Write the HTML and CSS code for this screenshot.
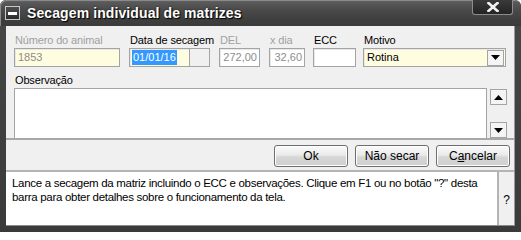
FILE: index.html
```html
<!DOCTYPE html>
<html lang="pt">
<head>
<meta charset="utf-8">
<title>Secagem individual de matrizes</title>
<link rel="stylesheet" href="styles.css">
</head>
<body>
<div class="window">
  <div class="titlebar">
    <span class="sysicon"><span class="dash"></span></span>
    <span class="title">Secagem individual de matrizes</span>
    <span class="close"><svg width="12" height="10" viewBox="0 0 12 10"><path d="M1.5 1L10.5 9M10.5 1L1.5 9" stroke="#f2f2f2" stroke-width="2.6" stroke-linecap="square"/></svg></span>
  </div>
  <div class="frame">
    <div class="client">
      <div class="top-panel">
        <div class="fields">
          <div class="field f-animal">
            <label class="lbl disabled">Número do animal</label>
            <div class="box yellow"><span class="val disabled">1853</span></div>
          </div>
          <div class="field f-date">
            <label class="lbl">Data de secagem</label>
            <div class="date-wrap">
              <div class="box yellow date"><span class="sel">01/01/16</span></div>
              <div class="date-btn"></div>
            </div>
          </div>
          <div class="field f-del">
            <label class="lbl disabled">DEL</label>
            <div class="box right"><span class="val disabled">272,00</span></div>
          </div>
          <div class="field f-xdia">
            <label class="lbl disabled">x dia</label>
            <div class="box right"><span class="val disabled">32,60</span></div>
          </div>
          <div class="field f-ecc">
            <label class="lbl">ECC</label>
            <div class="box"></div>
          </div>
          <div class="field f-motivo">
            <label class="lbl">Motivo</label>
            <div class="box yellow select">
              <span class="val">Rotina</span>
              <span class="drop"><svg width="9" height="5" viewBox="0 0 9 5"><path d="M0 0h9L4.5 5z" fill="#000"/></svg></span>
            </div>
          </div>
        </div>
        <label class="lbl obs-lbl">Observação</label>
        <div class="obs-row">
          <div class="memo"></div>
          <div class="scroll">
            <span class="sbtn"><svg width="9" height="5" viewBox="0 0 9 5"><path d="M4.5 0L9 5H0z" fill="#000"/></svg></span>
            <span class="sbtn"><svg width="9" height="5" viewBox="0 0 9 5"><path d="M0 0h9L4.5 5z" fill="#000"/></svg></span>
          </div>
        </div>
      </div>
      <div class="button-bar">
        <button class="btn">Ok</button>
        <button class="btn">Não secar</button>
        <button class="btn">C<u>a</u>ncelar</button>
      </div>
      <div class="hint">
        <div class="hint-text">Lance a secagem da matriz incluindo o ECC e observações. Clique em F1 ou no botão "?" desta barra para obter detalhes sobre o funcionamento da tela.</div>
        <div class="help">?</div>
      </div>
    </div>
  </div>
</div>
</body>
</html>
```
FILE: styles.css
```css
* { box-sizing: border-box; }
html, body { margin: 0; padding: 0; background: #ffffff; }
body { font-family: "Liberation Sans", Arial, sans-serif; font-size: 11px; color: #000; }

.window {
  width: 521px;
  height: 232px;
  display: flex;
  flex-direction: column;
  background: linear-gradient(#474747, #3a3a3a);
  border-radius: 6px 6px 0 0;
  overflow: hidden;
}

.titlebar {
  height: 26px;
  flex: none;
  display: flex;
  align-items: flex-start;
  background: linear-gradient(#6c6c6c 0, #5a5a5a 2px, #4a4a4a 10px, #3e3e3e 20px, #3a3a3a 26px);
  border-radius: 6px 6px 0 0;
  box-shadow: inset 1px 1px 0 #8a8a8a;
}

.sysicon {
  width: 15px;
  height: 14px;
  margin: 6px 0 0 5px;
  border: 1px solid #c8c8c8;
  background: linear-gradient(#4e4e4e, #2c2c2c);
  display: flex;
  align-items: center;
  justify-content: center;
  flex: none;
}
.sysicon .dash { width: 9px; height: 3px; background: #ffffff; }

.title {
  margin: 4px 0 0 7px;
  font-size: 14px;
  font-weight: bold;
  color: #ffffff;
  line-height: 18px;
  text-shadow: 1px 1px 1px #000, 0 0 2px #1e1e1e;
  letter-spacing: 0.1px;
}

.close {
  margin-left: auto;
  margin-right: 8px;
  width: 41px;
  height: 15px;
  background: linear-gradient(#3a3a3a, #242424);
  border: 1px solid #8c8c8c;
  border-top: none;
  border-radius: 0 0 3px 3px;
  display: flex;
  align-items: center;
  justify-content: center;
  padding-bottom: 1px;
}

.frame {
  flex: 1;
  display: flex;
  padding: 0 6px 6px 6px;
}

.client {
  flex: 1;
  display: flex;
  flex-direction: column;
  background: #f0f0f0;
  border-right: 1px solid #9a9a9a;
  border-bottom: 1px solid #8a8a8a;
}

.top-panel {
  padding: 8px 0 0 8px;
  border-bottom: 2px solid #a8a8a8;
}

.fields { display: flex; }
.field { display: flex; flex-direction: column; }
.f-animal { width: 106px; margin-right: 9px; }
.f-date { width: 81px; margin-right: 9px; }
.f-del { width: 41px; margin-right: 9px; }
.f-xdia { width: 36px; margin-right: 8px; }
.f-ecc { width: 43px; margin-right: 7px; }
.f-motivo { width: 143px; }

.lbl {
  display: block;
  height: 14px;
  line-height: 13px;
  padding-left: 1px;
  white-space: nowrap;
  letter-spacing: -0.15px;
}
.lbl.disabled { color: #a0a0a0; }

.box {
  height: 19px;
  border: 1px solid #a4a4a4;
  background: #ffffff;
  display: flex;
  align-items: center;
  padding: 0 3px;
  font-size: 11px;
  box-shadow: inset 1px 1px 0 #e8e8e8;
}
.box.yellow { background: #fffde0; }
.box.right { justify-content: flex-end; padding-right: 2px; }
.val { line-height: 13px; }
.val.disabled { color: #8c8c8c; }

.date-wrap { display: flex; }
.date { width: 61px; padding-left: 2px; flex: none; }
.sel { background: #3399ff; color: #ffffff; padding: 1px 1px; line-height: 13px; }
.date-btn {
  width: 20px;
  height: 19px;
  flex: none;
  border: 1px solid #a4a4a4;
  border-left: none;
  background: #f0f0f0;
}

.select { justify-content: space-between; padding-right: 1px; }
.drop {
  width: 17px;
  height: 16px;
  border: 1px solid #a4a4a4;
  background: #f4f4f4;
  display: flex;
  align-items: center;
  justify-content: center;
}

.obs-lbl { margin-top: 7px; }
.obs-row { display: flex; margin-top: 0; }
.memo {
  width: 473px;
  height: 50px;
  border: 1px solid #a4a4a4;
  border-bottom: none;
  background: #ffffff;
}
.scroll {
  margin-left: 3px;
  display: flex;
  flex-direction: column;
  justify-content: space-between;
  padding: 1px 0 0;
}
.sbtn {
  width: 17px;
  height: 16px;
  border: 1px solid #a4a4a4;
  background: #f4f4f4;
  display: flex;
  align-items: center;
  justify-content: center;
}

.button-bar {
  height: 32px;
  display: flex;
  justify-content: flex-end;
  align-items: flex-start;
  gap: 7px;
  padding: 5px 4px 0 0;
  border-bottom: 2px solid #b4b4b4;
}
.btn {
  width: 74px;
  height: 22px;
  border: 1px solid #6e6e6e;
  border-radius: 3px;
  background: linear-gradient(#fbfbfb 0, #eaeaea 45%, #d6d6d6 55%, #cfcfcf 100%);
  box-shadow: inset 0 0 0 1px #ffffff;
  font-family: "Liberation Sans", Arial, sans-serif;
  font-size: 12px;
  color: #000;
  padding: 0;
  line-height: 18px;
}
.btn u { text-underline-offset: 1px; }

.hint {
  flex: 1;
  display: flex;
}
.hint-text {
  flex: 1;
  background: #ffffff;
  border-right: 2px solid #b4b4b4;
  padding: 4px 6px 0 6px;
  font-size: 11.5px;
  line-height: 14px;
  letter-spacing: -0.3px;
}
.help {
  width: 15px;
  display: flex;
  align-items: center;
  justify-content: center;
  font-size: 12px;
  padding-top: 2px;
}
```
